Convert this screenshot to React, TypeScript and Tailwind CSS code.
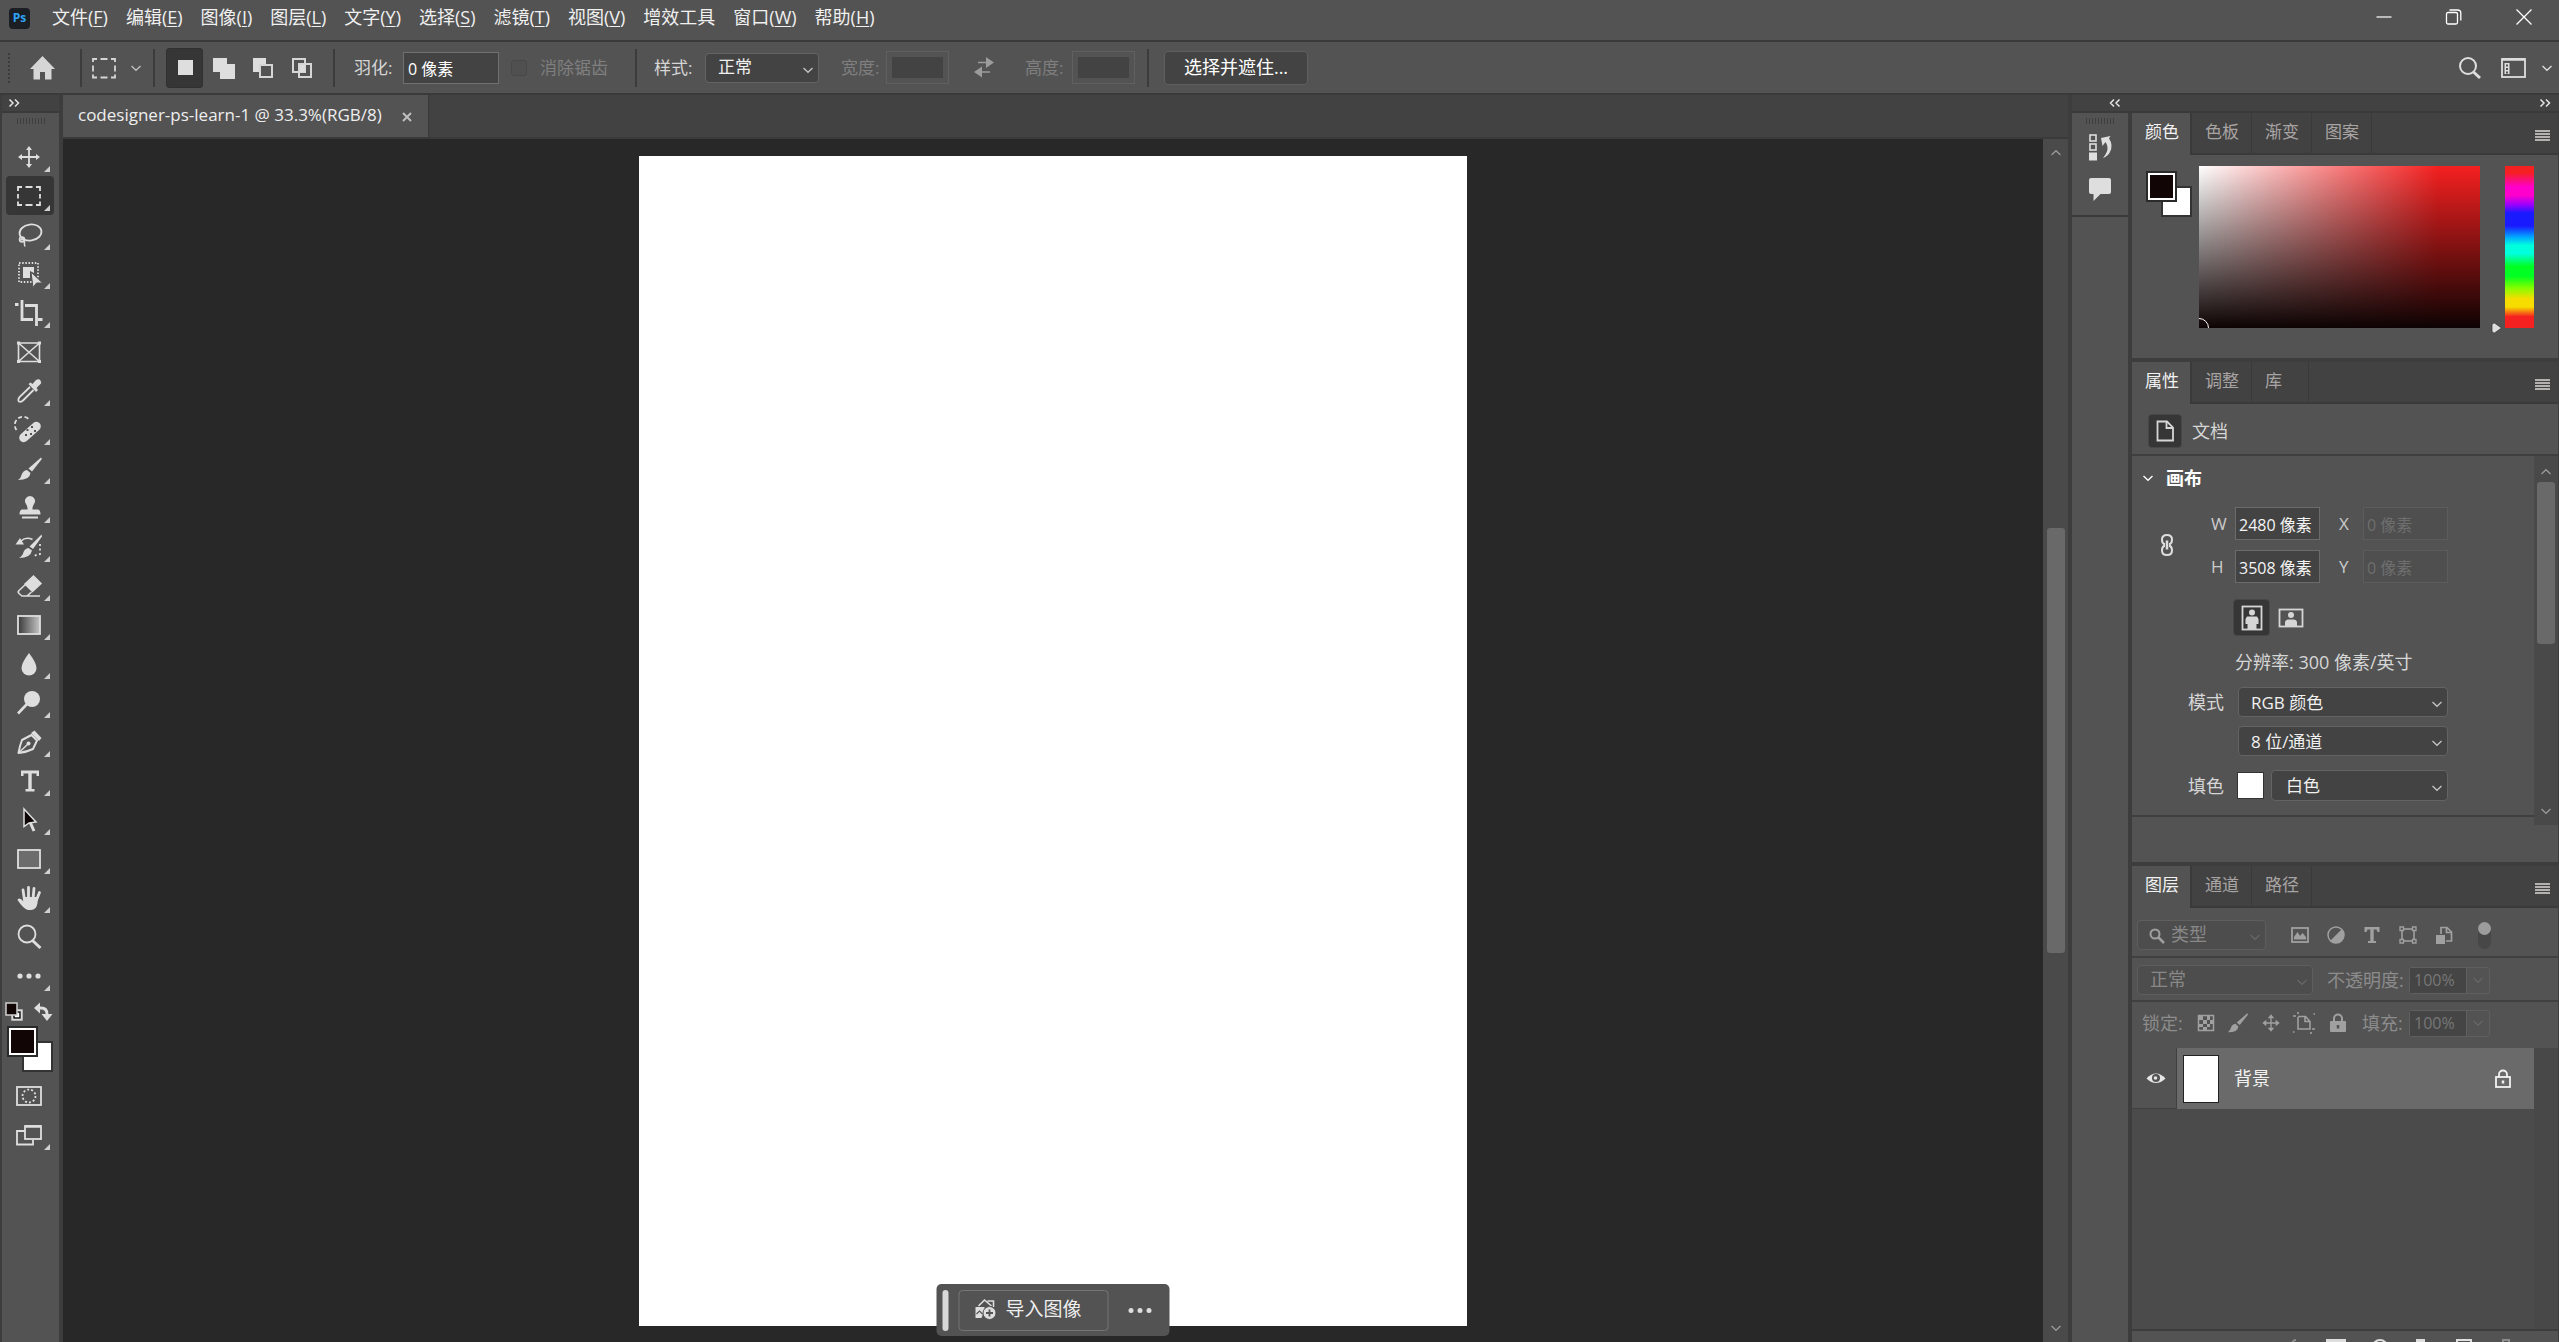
import React from "react";

type IconProps = { className?: string; children: React.ReactNode; box?: string };

function Icon({ className = "size-[30px]", children, box = "0 0 30 30" }: IconProps) {
  return (
    <svg
      viewBox={box}
      className={className}
      fill="none"
      stroke="currentColor"
      strokeWidth="2"
      aria-hidden="true"
    >
      {children}
    </svg>
  );
}

function Chevron({ className = "", up = false }: { className?: string; up?: boolean }) {
  return (
    <svg viewBox="0 0 12 12" className={`size-3 shrink-0 ${className}`} fill="none" stroke="currentColor" strokeWidth="1.3" aria-hidden="true">
      <path d={up ? "M1.5 8L6 3.7L10.5 8" : "M1.5 4L6 8.3L10.5 4"} />
    </svg>
  );
}

const menus: [string, string?][] = [
  ["文件", "F"], ["编辑", "E"], ["图像", "I"], ["图层", "L"], ["文字", "Y"], ["选择", "S"],
  ["滤镜", "T"], ["视图", "V"], ["增效工具"], ["窗口", "W"], ["帮助", "H"],
];

function MenuBar() {
  return (
    <header className="flex h-10 shrink-0 items-center bg-[#535353] pb-1.5 pl-[9px]">
      <div className="mt-0.5 flex size-[21px] items-center justify-center rounded-[4px] bg-[#1b1f24] text-[12px] font-bold text-[#2ea3f7]">
        Ps
      </div>
      <nav className="ml-[22px] flex gap-[18px] text-[18px] leading-6">
        {menus.map(([name, key]) => (
          <button key={name} type="button" className="whitespace-nowrap">
            {name}
            {key && (
              <>
                (<u className="underline-offset-2">{key}</u>)
              </>
            )}
          </button>
        ))}
      </nav>
      <div className="ml-auto flex items-center gap-[52px] pr-[26px] text-white">
        <button type="button" aria-label="最小化">
          <Icon className="size-[18px]" box="0 0 18 18"><path d="M1.500 9H16.500" strokeWidth="1.2" /></Icon>
        </button>
        <button type="button" aria-label="还原">
          <Icon className="size-[18px]" box="0 0 18 18">
            <rect x="1.500" y="4.500" width="11" height="11.500" rx="1.500" strokeWidth="1.3" />
            <path d="M4.500 2H12.500Q15.800 2 15.800 5V12.500" strokeWidth="1.3" />
          </Icon>
        </button>
        <button type="button" aria-label="关闭">
          <Icon className="size-[18px]" box="0 0 18 18"><path d="M1.500 1.500L16.500 16.500M16.500 1.500L1.500 16.500" strokeWidth="1.3" /></Icon>
        </button>
      </div>
    </header>
  );
}

function Divider({ className = "" }: { className?: string }) {
  return <div className={`h-[38px] w-0.5 shrink-0 bg-[#3c3c3c] ${className}`} />;
}

function OptionsBar() {
  return (
    <div className="flex h-[55px] shrink-0 items-center border-y-2 border-[#3a3a3a] bg-[#535353] pr-1.5 pl-2 text-[17px] text-[#d6d6d6]">
      <div className="h-[30px] w-[3px] border-l-2 border-dotted border-[#3c3c3c]" />
      <button type="button" aria-label="主页" className="ml-[17px]">
        <Icon className="size-7" box="0 0 28 28">
          <path d="M14.500 2L2 15H5.500V25.500H12V18H17V25.500H23.500V15H27Z" fill="currentColor" stroke="none" />
        </Icon>
      </button>
      <Divider className="ml-6" />
      <button type="button" aria-label="矩形选框工具" className="ml-2 flex items-center">
        <Icon className="size-7" box="0 0 28 28">
          <path d="M3 8V5H7M10.500 5H17.500M21 5H25V8M25 11.500V17.500M25 20.500V23.500H21M17.500 23.500H10.500M7 23.500H3V20.500M3 17.500V11.500" strokeWidth="1.800" />
        </Icon>
        <Chevron className="ml-3 text-[#c0c0c0]" />
      </button>
      <Divider className="ml-[11px]" />
      <div className="ml-[11px] flex gap-0.5">
        <button type="button" aria-label="新选区" className="flex h-10 w-[37px] items-center justify-center rounded-[3px] border border-[#303030] bg-[#363636]">
          <Icon className="size-6" box="0 0 24 24"><rect x="5" y="4" width="15" height="15" fill="#dedede" stroke="none" /></Icon>
        </button>
        <button type="button" aria-label="添加到选区" className="flex h-10 w-[37px] items-center justify-center">
          <Icon className="size-6" box="0 0 24 24"><path d="M1 2H15V8H23V23H8V16H1Z" fill="#dedede" stroke="none" /></Icon>
        </button>
        <button type="button" aria-label="从选区减去" className="flex h-10 w-[37px] items-center justify-center">
          <Icon className="size-6" box="0 0 24 24">
            <path d="M2 2H15V8H8V16H2Z" fill="#dedede" stroke="none" />
            <rect x="9" y="9" width="12" height="12" />
          </Icon>
        </button>
        <button type="button" aria-label="与选区交叉" className="flex h-10 w-[37px] items-center justify-center">
          <Icon className="size-6" box="0 0 24 24">
            <rect x="3" y="3" width="12" height="13" />
            <rect x="9" y="8" width="12" height="13" />
            <rect x="10" y="9" width="5" height="7" fill="#dedede" stroke="none" />
          </Icon>
        </button>
      </div>
      <Divider className="ml-[13px]" />
      <label htmlFor="feather" className="ml-[19px] w-[49px] shrink-0">羽化:</label>
      <input id="feather" defaultValue="0 像素" className="h-8 w-24 border border-[#707070] bg-[#434343] px-1 text-[16px] text-white" />
      <input id="anti" type="checkbox" disabled className="ml-3 size-4 appearance-none rounded-[3px] border border-[#484848] bg-[#505050]" />
      <label htmlFor="anti" className="ml-[13px] w-[95px] shrink-0 text-[#7f7f7f]">消除锯齿</label>
      <Divider />
      <label htmlFor="style" className="ml-[17px] w-[51px] shrink-0">样式:</label>
      <Select id="style" value="正常" className="h-[30px] w-[114px]" />
      <label htmlFor="ow" className="ml-[22px] w-[45px] shrink-0 text-[#7f7f7f]">宽度:</label>
      <input id="ow" disabled className="h-[33px] w-[63px] border border-[#606060] bg-[#434343] bg-clip-content p-[5px]" />
      <button type="button" disabled aria-label="交换宽度和高度" className="ml-[23px] text-[#9c9c9c]">
        <Icon className="size-6" box="0 0 24 24">
          <path d="M6 6.500H15M9 16H18" strokeWidth="1.500" />
          <path d="M14 1L22 6.500L14 12ZM10 10.500L2 16L10 21.500Z" fill="currentColor" stroke="none" />
        </Icon>
      </button>
      <label htmlFor="oh" className="ml-[29px] w-[47px] shrink-0 text-[#7f7f7f]">高度:</label>
      <input id="oh" disabled className="h-[33px] w-[63px] border border-[#606060] bg-[#434343] bg-clip-content p-[5px]" />
      <Divider className="ml-3" />
      <button type="button" className="ml-[15px] h-[34px] w-36 rounded-[4px] border border-[#5f5f5f] bg-[#434343] text-[18px] text-white">
        选择并遮住...
      </button>
      <button type="button" aria-label="搜索" className="ml-auto text-[#dedede]">
        <Icon className="size-6" box="0 0 24 24"><circle cx="10" cy="10" r="8" /><path d="M15.500 16L22 22" strokeWidth="3" /></Icon>
      </button>
      <button type="button" aria-label="选择工作区" className="ml-[17px] flex items-center text-[#dedede]">
        <Icon className="size-7" box="0 0 28 28">
          <rect x="3" y="5" width="23" height="18" strokeWidth="1.800" />
          <path d="M3 5.500H26" strokeWidth="2.500" />
          <rect x="5.500" y="9" width="5" height="11" fill="currentColor" stroke="none" />
          <path d="M8 10.500V19.500" strokeWidth="2" strokeDasharray="2 1.500" stroke="#535353" />
        </Icon>
        <Chevron className="ml-3.5" />
      </button>
    </div>
  );
}

type SelectProps = { id: string; value: string; label?: string; className?: string; dim?: boolean; pad?: string; text?: string };

function Select({ id, value, label, className = "", dim = false, pad = "pl-3", text = "text-[17px]" }: SelectProps) {
  return (
    <div
      className={`relative shrink-0 rounded-[4px] border ${dim ? "border-[#5e5e5e] bg-[#4d4d4d] text-[#888]" : "border-[#636363] bg-[#434343] text-[#f0f0f0]"} ${className}`}
    >
      <select id={id} aria-label={label} disabled={dim} defaultValue={value} className={`h-full w-full appearance-none pb-0.5 opacity-100 ${pad} ${text}`}>
        <option>{value}</option>
      </select>
      <Chevron className={`pointer-events-none absolute top-1/2 right-1 -translate-y-1/3 ${dim ? "text-[#666]" : "text-[#c4c4c4]"}`} />
    </div>
  );
}

const C = "currentColor";
const brush = (
  <>
    <path d="M27 3.500Q28 4 27.500 5.500L18 17.500L14.500 14.500Z" fill={C} stroke="none" />
    <path d="M13 16L16.500 19Q16 26 4 26Q7 24 7.500 21Q9 16.500 13 16Z" fill={C} stroke="none" />
  </>
);

type Tool = { name: string; icon: React.ReactNode; more?: boolean };

const tools: Tool[] = [
  { name: "移动工具", icon: <><path d="M6 15H24M15 6V24" strokeWidth="1.800" /><path d="M15 4L18 8H12ZM15 26L18 22H12ZM4 15L8 12V18ZM26 15L22 12V18Z" fill={C} stroke="none" /></> },
  { name: "矩形选框工具", icon: <path d="M4 10V6H8M11.500 6H18.500M22 6H26V10M26 13V17.500M26 20.500V24H22M18.500 24H11.500M8 24H4V20.500M4 17.500V13" strokeWidth="1.800" /> },
  { name: "套索工具", icon: <><ellipse cx="16.500" cy="12.500" rx="11" ry="8" strokeWidth="1.800" transform="rotate(-8 16.500 12.500)" /><circle cx="8" cy="19.500" r="2.500" strokeWidth="1.500" /><path d="M6 20Q11 19 10.500 22Q10 24 11 26.500" strokeWidth="1.500" /></> },
  { name: "对象选择工具", icon: <><rect x="5" y="4" width="19" height="19" strokeWidth="1.800" strokeDasharray="1.500 1.670" /><path d="M9 8H20V14L16 12V19H9Z" fill={C} stroke="none" /><path d="M17 13L28.500 24L22.500 24L19 28.500Z" fill={C} stroke="#535353" strokeWidth="1" /></> },
  { name: "裁剪工具", icon: <path d="M1 6.500H4.500M8 2V21.500H19M24 21.500H28.500M11 7.500H22.500V28" strokeWidth="2.800" /> },
  { name: "图框工具", more: false, icon: <><path d="M4.500 6H25.500V24.500H4.500ZM4.500 6L25.500 24.500M25.500 6L4.500 24.500" strokeWidth="1.600" /><path d="M3 4.500H6V7.500H3ZM24 4.500H27V7.500H24ZM3 23H6V26H3ZM24 23H27V26H24Z" fill={C} stroke="none" /></> },
  { name: "吸管工具", icon: <><path d="M16 11L5.500 21Q3.500 24 5 25.500Q7 26.500 9.500 24L19.500 14" strokeWidth="1.800" /><path d="M14.500 8L16.500 6.500L18.500 8L22 4Q25 2.500 26.500 4.500Q28 6.500 26 8.500L22.500 12L24 14L22 16Z" fill={C} stroke="none" /></> },
  { name: "污点修复画笔工具", icon: <><rect x="3" y="12.500" width="26" height="9" rx="4.500" transform="rotate(-42 16 17)" fill={C} stroke="none" /><path d="M2.500 15A8 8 0 0 1 15.500 5" strokeWidth="1.800" strokeDasharray="4 2.500" /><path d="M13.500 14V16M18 11V13M17 18V20M21 15V17M12 19V21" stroke="#535353" strokeWidth="2" /></> },
  { name: "画笔工具", icon: brush },
  { name: "仿制图章工具", icon: <path d="M16 3A5 5 0 0 1 20 11Q18 14 18.500 16.500H24Q26.500 17 26.500 21.500H5.500Q5.500 17 8 16.500H13.500Q14 14 12 11A5 5 0 0 1 16 3ZM8 23.500H24V25.500H8Z" fill={C} stroke="none" /> },
  { name: "历史记录画笔工具", icon: <><path d="M27.500 2.500L28 4.500L19 17L15.500 14.500ZM14.500 16L18 18.500Q16.500 26 5 26Q9 23.500 9.500 20Q11 16.500 14.500 16ZM1.500 12.500L6 6L10 12.500Z" fill={C} stroke="none" /><path d="M7 9Q12 4.500 18.500 7.500" strokeWidth="1.600" /><path d="M26 12V22L19 24" strokeWidth="1.800" strokeDasharray="2 2.500" /></> },
  { name: "橡皮擦工具", icon: <><path d="M11 13L19.500 5L27 12.500L18.500 20.500Z" fill={C} strokeWidth="1.500" /><path d="M11.500 13.500L5 19.500Q3.500 21 5 22.500L8 25H13L17.500 21M12 25H26" strokeWidth="1.600" /></> },
  { name: "渐变工具", icon: <><defs><linearGradient id="toolGradient"><stop offset="0" stopColor="#3a3a3a" /><stop offset="1" stopColor="#c6c6c6" /></linearGradient></defs><rect x="4" y="6" width="22" height="18" fill="url(#toolGradient)" strokeWidth="1.800" /></> },
  { name: "模糊工具", icon: <path d="M15 4Q22.500 14 22.500 19A7.500 7.500 0 0 1 7.500 19Q7.500 14 15 4Z" fill={C} stroke="none" /> },
  { name: "减淡工具", icon: <><circle cx="18" cy="11" r="8" fill={C} stroke="none" /><path d="M13 16L4 25.500" strokeWidth="2.600" /></> },
  { name: "钢笔工具", icon: <><path d="M17.500 8L8 13Q6 18 4.500 26Q13 25 19 22L23 13.500Z" strokeWidth="2" strokeLinejoin="round" /><path d="M5 25.500L14 17" strokeWidth="1.500" /><circle cx="14.500" cy="16.500" r="2" fill={C} stroke="none" /><path d="M17 6L20.500 3.500L27.500 11L25 14Z" fill={C} stroke="none" /></> },
  { name: "横排文字工具", icon: <path d="M7 4.500H25V10H22.500V7.500H17.700V23H20.500V25.500H11.500V23H14.300V7.500H9.500V10H7Z" fill={C} stroke="none" /> },
  { name: "路径选择工具", icon: <><path d="M16 17L20 26" strokeWidth="3" /><path d="M10 4L22 17L15 18L10 21.500Z" fill="#0d0505" strokeWidth="1.500" /></> },
  { name: "矩形工具", icon: <rect x="4" y="6" width="22" height="18" fill="#6c6c6c" strokeWidth="1.800" /> },
  { name: "抓手工具", icon: <><path d="M10.500 17L9 7M14.500 16V4.500M19 16L20 5.500M22.500 17L25.500 9.500" strokeWidth="2.800" strokeLinecap="round" /><path d="M9 14H24L23.500 20Q22.500 27 17 27H14Q9.500 26 3.500 17Q4 14.500 7 16L9.500 18.500Z" fill={C} stroke="none" /></> },
  { name: "缩放工具", more: false, icon: <><circle cx="13" cy="12" r="8.500" strokeWidth="1.800" /><path d="M18.500 18.500L26.500 26" strokeWidth="3" /></> },
  { name: "编辑工具栏", icon: <><circle cx="6" cy="15" r="2.600" fill={C} stroke="none" /><circle cx="15" cy="15" r="2.600" fill={C} stroke="none" /><circle cx="24" cy="15" r="2.600" fill={C} stroke="none" /></> },
];

function Corner() {
  return (
    <svg viewBox="0 0 6 6" className="absolute right-1 bottom-1 size-1.5" aria-hidden="true">
      <path d="M6 0V6H0Z" fill="#d0d0d0" />
    </svg>
  );
}

function Toolbar() {
  return (
    <aside className="w-[63px] shrink-0 border-x-2 border-r-4 border-[#3d3d3d] bg-[#535353] text-[#dedede]">
      <div className="flex h-[18px] items-center border-b-2 border-[#3a3a3a] bg-[#424242] pl-1.5">
        <DoubleChevron />
      </div>
      <div className="mx-auto mt-[5px] h-1.5 w-7 bg-[repeating-linear-gradient(90deg,#3e3e3e_0_1px,transparent_1px_3px)]" />
      <div className="mt-[13px] flex flex-col items-start pl-1">
        {tools.map((t, i) => (
          <button
            key={t.name}
            type="button"
            aria-label={t.name}
            className={`relative flex h-[39px] w-12 items-center pl-2 ${i === 1 ? "rounded-[4px] bg-[#363636]" : ""}`}
          >
            <Icon>{t.icon}</Icon>
            {t.more !== false && <Corner />}
          </button>
        ))}
      </div>
      <div className="flex justify-between px-[3px] pt-[7px] pr-1.5">
        <button type="button" aria-label="默认前景色和背景色">
          <Icon className="size-5" box="0 0 20 20">
            <rect x="7" y="8" width="10" height="10" fill="#fff" stroke="#cfcfcf" strokeWidth="1.500" />
            <rect x="9" y="10" width="6" height="6" fill="#fff" stroke="#111" strokeWidth="1.500" />
            <rect x="1" y="1" width="11" height="12" fill="#110505" stroke="#cfcfcf" strokeWidth="1.500" />
          </Icon>
        </button>
        <button type="button" aria-label="切换前景色和背景色">
          <Icon className="size-5" box="0 0 20 20">
            <path d="M5 6H8Q14 6 14 12V14" strokeWidth="2.800" />
            <path d="M7 0.500V11.500L1 6ZM8.500 12H19.500L14 19Z" fill={C} stroke="none" />
          </Icon>
        </button>
      </div>
      <div className="mt-1 ml-[5px]">
        <Swatches />
      </div>
      <div className="flex flex-col items-start pt-1 pl-1">
        <button type="button" aria-label="快速蒙版" className="relative flex h-[39px] w-12 items-center pl-2">
          <Icon>
            <rect x="3" y="6" width="24" height="18" strokeWidth="1.800" />
            <circle cx="15" cy="15" r="6.500" strokeDasharray="2 2" strokeWidth="1.800" />
          </Icon>
        </button>
        <button type="button" aria-label="屏幕模式" className="relative flex h-[39px] w-12 items-center pl-2">
          <Icon>
            <path d="M11 11H3V24.500H19V20" strokeWidth="1.800" />
            <rect x="11" y="6" width="16" height="13" strokeWidth="1.800" />
            <path d="M11 6.500H27" strokeWidth="2.500" />
          </Icon>
          <Corner />
        </button>
      </div>
    </aside>
  );
}

function Swatches() {
  return (
    <div className="relative h-[46px] w-[46px]">
      <button type="button" aria-label="背景色" className="absolute right-0 bottom-0 size-[31px] border-2 border-[#333] bg-white" />
      <button type="button" aria-label="前景色" className="absolute top-0 left-0 size-[31px] border-2 border-[#2a2a2a] bg-[#110505] shadow-[inset_0_0_0_2px_#fff]" />
    </div>
  );
}

function DoubleChevron({ left = false }: { left?: boolean }) {
  return (
    <svg viewBox="0 0 12 8" className="h-2 w-3" fill="none" stroke="#e4e4e4" strokeWidth="1.500" aria-hidden="true">
      <path d={left ? "M5 0.500L1.500 4L5 7.500M10.500 0.500L7 4L10.500 7.500" : "M1.500 0.500L5 4L1.500 7.500M7 0.500L10.500 4L7 7.500"} />
    </svg>
  );
}

function Workspace() {
  return (
    <main className="flex min-w-0 flex-1 flex-col">
      <div className="flex h-11 shrink-0 border-b-2 border-[#3a3a3a] bg-[#424242]">
        <div className="flex items-center border-r border-[#383838] bg-[#535353] pr-4 pb-0.5 pl-[15px] text-[17px]">
          <span className="whitespace-nowrap text-[#eee]">codesigner-ps-learn-1 @ 33.3%(RGB/8)</span>
          <button type="button" aria-label="关闭文档" className="ml-5">
            <svg viewBox="0 0 10 10" className="mt-1 size-2.5" fill="none" stroke="#bfbfbf" strokeWidth="2" aria-hidden="true">
              <path d="M1 1L9 9M9 1L1 9" />
            </svg>
          </button>
        </div>
      </div>
      <div className="flex min-h-0 flex-1 bg-[#282828]">
        <div className="relative flex min-w-0 flex-1 justify-center pt-[17px] pb-4">
          <div className="aspect-[2480/3508] h-full bg-white" />
          <div className="absolute bottom-1.5 left-1/2 flex h-[52px] -translate-x-1/2 items-center rounded-[5px] bg-[#535353] pr-[18px] pl-1.5 text-[#eee]">
            <div className="h-[41px] w-1.5 rounded-[3px] bg-[#d8d8d8]" />
            <button type="button" className="ml-2.5 flex h-[41px] w-[150px] items-center rounded-[4px] border border-[#757575] pr-4 pb-0.5 pl-3.5 text-[19px]">
              <Icon className="mr-2 size-6" box="0 0 24 24">
                <path d="M5 9L11 3L18 9M14 4H20V10" stroke="#dedede" strokeWidth="1.600" />
                <path d="M2 10H11V13L8 21H2Z" fill="#dedede" stroke="none" />
                <path d="M3 17L6 14L9 17" stroke="#535353" strokeWidth="1.200" />
                <circle cx="16" cy="16" r="6.500" fill="#dedede" stroke="#535353" strokeWidth="1" />
                <path d="M16 12.500V19.500M12.500 16H19.500" stroke="#535353" strokeWidth="1.800" />
              </Icon>
              <span className="whitespace-nowrap">导入图像</span>
            </button>
            <button type="button" aria-label="更多选项" className="ml-5 flex gap-1">
              <span className="size-[5px] rounded-full bg-[#dedede]" />
              <span className="size-[5px] rounded-full bg-[#dedede]" />
              <span className="size-[5px] rounded-full bg-[#dedede]" />
            </button>
          </div>
        </div>
        <div className="flex w-[25px] flex-col items-center bg-[#4a4a4a] pt-2 pb-2 text-[#999]">
          <Chevron up />
          <div className="flex min-h-0 w-full flex-1 flex-col items-center">
            <div className="flex-[368]" />
            <div className="w-[18px] flex-[423] rounded-[3px] bg-[#696969]" />
            <div className="flex-[368]" />
          </div>
          <Chevron />
        </div>
      </div>
    </main>
  );
}

function PanelTabs({ tabs }: { tabs: string[] }) {
  return (
    <div className="flex h-[42px] shrink-0 bg-[#424242] text-[17px]" role="tablist">
      {tabs.map((t, i) => (
        <button
          key={t}
          type="button"
          role="tab"
          aria-selected={i === 0}
          className={
            i === 0
              ? "w-[60px] border-r-2 border-[#3a3a3a] bg-[#535353] pb-1 pl-0.5 text-[#f2f2f2]"
              : "min-w-[57px] border-r border-b-2 border-[#3a3a3a] pr-3 pb-0.5 pl-[13px] text-left text-[#a9a4a4]"
          }
        >
          {t}
        </button>
      ))}
      <div className="flex flex-1 items-center justify-end border-b-2 border-[#3a3a3a] pr-2">
        <button type="button" aria-label="面板菜单" className="text-[#b5b0b0]">
          <svg viewBox="0 0 15 11" className="mt-1 h-[11px] w-[15px]" aria-hidden="true">
            <path d="M0 0H15V2H0ZM0 3H15V5H0ZM0 6H15V8H0ZM0 9H15V11H0Z" fill="currentColor" />
          </svg>
        </button>
      </div>
    </div>
  );
}

function ColorPanel() {
  return (
    <section className="flex h-[249px] shrink-0 flex-col border-b-4 border-[#3d3d3d]">
      <PanelTabs tabs={["颜色", "色板", "渐变", "图案"]} />
      <div className="flex pt-[11px] pr-6 pl-3.5">
        <div className="mt-[5px]">
          <Swatches />
        </div>
        <div className="relative ml-[7px] h-[162px] flex-1 overflow-hidden bg-[linear-gradient(to_top,#0d0303,transparent),linear-gradient(to_right,#fff,#f52020_85%)]">
          <div className="absolute -bottom-2.5 -left-2.5 size-5 rounded-full border border-white" />
        </div>
        <div className="relative ml-[25px] h-[162px] w-[29px] bg-[linear-gradient(to_bottom,#f52020_4%,#f0c_13%,#f0c_18%,#90f_24%,#1a1aff_29%,#1a1aff_37%,#0af_44%,#00ffdd_49%,#00ffdd_54%,#0f2_62%,#0f2_68%,#7dff00_75%,#f7dc00_82%,#f7dc00_87%,#f52020_93%)]">
          <svg viewBox="0 0 11 12" className="absolute -bottom-1.5 -left-3.5 h-3 w-[11px]" aria-hidden="true">
            <path d="M1 3Q1 1 3.500 1L10.500 6L3.500 11Q1 11 1 9Z" fill="#dedede" stroke="#333" strokeWidth="0.700" />
          </svg>
        </div>
      </div>
    </section>
  );
}

function NumberField({ id, label, value, dim }: { id: string; label: string; value: string; dim?: boolean }) {
  return (
    <>
      <label htmlFor={id} className="text-[17px] text-[#ccc]">{label}</label>
      <input
        id={id}
        defaultValue={value}
        disabled={dim}
        className={`h-[33px] w-[85px] border px-[3px] text-[16px] ${dim ? "border-[#5c5c5c] bg-[#4f4f4f] text-[#6e6e6e]" : "border-[#6b6b6b] bg-[#434343] text-[#f4f4f4]"}`}
      />
    </>
  );
}

function PropertiesPanel() {
  return (
    <section className="flex h-[504px] shrink-0 flex-col border-b-4 border-[#3d3d3d]">
      <PanelTabs tabs={["属性", "调整", "库"]} />
      <div className="flex h-[52px] shrink-0 items-center border-b-2 border-[#3f3f3f] pt-1 pl-4 text-[18px] text-[#d6d6d6]">
        <div className="flex size-[34px] items-center justify-center rounded-[4px] border border-[#474747] bg-[#363636]">
          <Icon className="size-6" box="0 0 24 24">
            <path d="M4.500 2.500H14L20 8.500V21.500H4.500Z" strokeWidth="1.800" />
            <path d="M13.500 2.500V9H20" strokeWidth="1.800" />
          </Icon>
        </div>
        <span className="ml-2.5">文档</span>
      </div>
      <div className="flex h-[369px] shrink-0">
        <div className="flex flex-1 flex-col">
          <div className="flex-1 border-b-2 border-[#3f3f3f] pt-2 pl-2.5 text-[18px] leading-7 text-[#d6d6d6]">
            <button type="button" className="flex items-center font-bold text-white">
              <Chevron />
              <span className="ml-3">画布</span>
            </button>
            <div className="mt-[15px] flex items-center">
              <button type="button" aria-label="链接宽度和高度" className="ml-[17px] text-[#dedede]">
                <Icon className="h-6 w-4" box="0 0 16 24">
                  <path d="M6 11H5Q3 10 3 6.500Q3 2 8 2Q13 2 13 6.500Q13 10 11 11H10M6 13H5Q3 14 3 17.500Q3 22 8 22Q13 22 13 17.500Q13 14 11 13H10" />
                  <path d="M8 7.500V16.500" strokeWidth="2.500" />
                </Icon>
              </button>
              <div className="ml-9 grid grid-cols-[24px_104px_24px_85px] items-center gap-y-2.5">
                <NumberField id="pw" label="W" value="2480 像素" />
                <NumberField id="px" label="X" value="0 像素" dim />
                <NumberField id="ph" label="H" value="3508 像素" />
                <NumberField id="py" label="Y" value="0 像素" dim />
              </div>
            </div>
            <div className="mt-4 ml-[91px] flex items-center gap-[7px]">
              <button type="button" aria-label="纵向" className="flex size-[37px] items-center justify-center rounded-[4px] border border-[#474747] bg-[#363636]">
                <Icon className="size-7" box="0 0 28 28">
                  <rect x="4.500" y="2.500" width="19" height="23" strokeWidth="1.800" />
                  <circle cx="14" cy="8.500" r="3" fill={C} stroke="none" />
                  <path d="M9 12.500H19L20.500 15V20H18.500V25H9.500V20H7.500V15Z" fill={C} stroke="none" />
                </Icon>
              </button>
              <button type="button" aria-label="横向">
                <Icon className="size-7" box="0 0 28 28">
                  <rect x="2.500" y="5.500" width="23" height="17" strokeWidth="1.800" />
                  <circle cx="14" cy="11" r="3" fill={C} stroke="none" />
                  <path d="M8 22V18Q8.500 15.500 11 15.500H17Q19.500 15.500 20 18V22Z" fill={C} stroke="none" />
                </Icon>
              </button>
            </div>
            <p className="mt-3 ml-[93px] whitespace-nowrap">分辨率: 300 像素/英寸</p>
            <div className="mt-[11px] ml-[46px] grid w-[260px] grid-cols-[50px_1fr] items-center gap-y-[9px]">
              <label htmlFor="mode">模式</label>
              <Select id="mode" value="RGB 颜色" className="h-[30px]" />
              <span />
              <Select id="depth" label="位深度" value="8 位/通道" className="h-[30px]" />
            </div>
            <div className="mt-3.5 ml-[46px] flex w-[260px] items-center">
              <label htmlFor="fill" className="w-[49px]">填色</label>
              <span className="size-[27px] border border-[#333] bg-white" />
              <Select id="fill" value="白色" pad="pl-3.5" className="ml-[7px] h-[31px] flex-1" />
            </div>
          </div>
          <div className="h-2" />
        </div>
        <div className="flex w-6 flex-col items-center bg-[#494949] pt-2.5 pb-2 text-[#999]">
          <Chevron up />
          <div className="mt-1 h-[162px] w-[18px] rounded-[3px] bg-[#696969]" />
          <Chevron className="mt-auto" />
        </div>
      </div>
    </section>
  );
}

function Percent({ id, label, width }: { id: string; label: string; width: string }) {
  return (
    <div className="flex items-center">
      <label htmlFor={id} className={`whitespace-nowrap ${width}`}>{label}</label>
      <div className="flex h-[27px] w-[81px] items-stretch rounded-[3px] border border-[#5f5f5f] text-[#777]">
        <input id={id} disabled defaultValue="100%" className="w-[57px] border-r border-[#5f5f5f] bg-[#454545] pl-1 text-[16px]" />
        <span className="flex flex-1 items-center justify-center"><Chevron className="text-[#666]" /></span>
      </div>
    </div>
  );
}

function LayersPanel() {
  return (
    <section className="flex min-h-0 flex-1 flex-col text-[18px] text-[#8c8c8c]">
      <PanelTabs tabs={["图层", "通道", "路径"]} />
      <div className="flex h-[50px] shrink-0 items-center border-b-2 border-[#404040] pt-1.5 pl-[5px] text-[#a0a0a0]">
        <div className="relative">
          <Icon className="pointer-events-none absolute top-2 left-3 z-10 size-4" box="0 0 16 16">
            <circle cx="6" cy="6" r="4.500" /><path d="M9.500 9.500L15 15" strokeWidth="2.500" />
          </Icon>
          <Select id="filter" label="图层筛选" value="类型" dim pad="pl-[33px]" text="text-[18px]" className="h-[30px] w-[129px]" />
        </div>
        <div className="ml-6 flex items-center gap-4">
          <Icon className="size-5" box="0 0 20 20"><rect x="2" y="3" width="16" height="14" strokeWidth="1.800" /><path d="M4 14.500V12L7.500 7L10 11L12.500 8L16 12V14.500Z" fill={C} stroke="none" /></Icon>
          <Icon className="size-5" box="0 0 20 20"><circle cx="10" cy="10" r="8" strokeWidth="1.500" /><path d="M16 4A8.500 8.500 0 0 1 4 16Z" fill={C} stroke="none" /></Icon>
          <Icon className="size-5" box="0 0 20 20"><path d="M2.500 2H17.500V7H15.500L14.500 4.500H11.700V16H14V18H6V16H8.300V4.500H5.500L4.500 7H2.500Z" fill={C} stroke="none" /></Icon>
          <Icon className="size-5" box="0 0 20 20"><rect x="4" y="4" width="12" height="12" strokeWidth="1.600" /><path d="M2 2H5.500V5.500H2ZM14.500 2H18V5.500H14.500ZM2 14.500H5.500V18H2ZM14.500 14.500H18V18H14.500Z" fill="#535353" strokeWidth="1.300" /></Icon>
          <Icon className="size-5" box="0 0 20 20"><path d="M7 9V2.500H13L17.500 7V16H12M12.500 2.500V7.500H17.500" strokeWidth="1.700" /><rect x="2" y="10" width="9" height="9" fill={C} stroke="none" /></Icon>
        </div>
        <button type="button" aria-label="打开或关闭图层筛选" className="ml-6 flex h-[27px] w-[13px] items-start rounded-full bg-[#474747]">
          <span className="size-[13px] rounded-full bg-[#9c9c9c]" />
        </button>
      </div>
      <div className="flex h-11 shrink-0 items-center border-b-2 border-[#404040] pt-0.5 pl-[5px]">
        <Select id="blend" label="混合模式" value="正常" dim text="text-[18px]" className="h-[30px] w-[176px]" />
        <div className="ml-3.5">
          <Percent id="opacity" label="不透明度:" width="w-[82px]" />
        </div>
      </div>
      <div className="flex h-[46px] shrink-0 items-center pb-1 pl-2.5">
        <span className="w-[55px]">锁定:</span>
        <div className="flex items-center gap-3 text-[#a0a0a0]">
          <Icon className="size-[18px]" box="0 0 18 18"><rect x="1.500" y="1.500" width="15" height="15" strokeWidth="1.500" /><path d="M2 2H6V6H2ZM10 2H13V6H10ZM6 6H10V10H6ZM13 6H16V10H13ZM2 10H6V13H2ZM10 10H13V13H10ZM6 13H10V16H6Z" fill={C} stroke="none" /></Icon>
          <Icon className="size-[22px]" box="3 2 26 26">{brush}</Icon>
          <Icon className="size-5"><path d="M6 15H24M15 6V24" /><path d="M15 2L20 8H10ZM15 28L20 22H10ZM2 15L8 10V20ZM28 15L22 10V20Z" fill={C} stroke="none" /></Icon>
          <Icon className="size-[22px]" box="0 0 22 22"><path d="M0 4H3M19 17H22M5 0V2M0 20H1.500M20.500 2H22M18 20V22M5 5V17H17V9.500L12.500 4.500H5M12 4.500V9.500H17" strokeWidth="1.600" /></Icon>
          <Icon className="size-[22px]" box="0 0 22 22"><path d="M7 9V6.500A4 4 0 0 1 15 6.500V9" /><rect x="3" y="9" width="16" height="11" rx="1" fill={C} stroke="none" /><path d="M11 13V16.500" stroke="#535353" strokeWidth="2.500" /></Icon>
        </div>
        <div className="ml-[13px]">
          <Percent id="fillop" label="填充:" width="w-[47px]" />
        </div>
      </div>
      <div className="flex min-h-0 flex-1 bg-[#4b4b4b]">
        <div className="flex-1">
          <div className="flex h-[61px] bg-[#6a6a6a] text-[#f2f2f2]">
            <button type="button" aria-label="指示图层可见性" className="flex w-[45px] items-center justify-center border-r border-b border-[#404040] bg-[#535353] pl-1">
              <Icon className="size-5" box="0 0 20 20">
                <path d="M0.500 10.500Q10 0.500 19.500 10.500Q10 19.500 0.500 10.500Z" fill="#e6e6e6" stroke="none" />
                <circle cx="10" cy="10" r="4" fill="#535353" stroke="none" />
                <circle cx="9.500" cy="10" r="1.800" fill="#e6e6e6" stroke="none" />
              </Icon>
            </button>
            <div className="ml-1.5 h-12 w-9 self-center border border-[#222] bg-white" />
            <span className="ml-[15px] self-center">背景</span>
            <Icon className="mr-5 ml-auto size-[22px] self-center" box="0 0 22 22">
              <path d="M7 9V6.500A4 4 0 0 1 15 6.500V9" strokeWidth="1.800" />
              <rect x="4" y="9" width="14" height="10" strokeWidth="1.800" />
              <path d="M11 12.500V15.500" strokeWidth="2.500" />
            </Icon>
          </div>
        </div>
        <div className="w-6 bg-[#484848]" />
      </div>
      <div className="flex h-[13px] shrink-0 items-start justify-end gap-[26px] overflow-hidden border-t-2 border-[#3c3c3c] pt-2 pr-[44px] text-[#dedede]">
        <Icon className="size-4 text-[#8c8c8c]" box="0 0 16 16"><path d="M12 1Q9 1 8 5L6 15" /></Icon>
        <Icon className="size-5" box="0 0 20 20"><path d="M0 0H20V16H0Z" fill={C} stroke="none" /></Icon>
        <Icon className="size-4" box="0 0 16 16"><circle cx="8" cy="8" r="7" /></Icon>
        <Icon className="size-4" box="0 0 16 16"><path d="M2 0H11V4H16V14H2Z" fill={C} stroke="none" /></Icon>
        <Icon className="size-4" box="0 0 16 16"><rect x="1" y="1" width="14" height="14" /></Icon>
        <Icon className="size-4 text-[#8c8c8c]" box="0 0 16 16"><path d="M5 6V1H11V6" /></Icon>
      </div>
    </section>
  );
}

function Dock() {
  return (
    <aside className="flex w-[491px] shrink-0 flex-col border-l-4 border-[#3d3d3d] bg-[#535353] text-[#dedede]">
      <div className="flex h-[18px] shrink-0 items-center border-b-2 border-[#3a3a3a] bg-[#424242] pr-2 pl-[37px]">
        <button type="button" aria-label="展开面板"><DoubleChevron left /></button>
        <button type="button" aria-label="折叠为图标" className="ml-auto"><DoubleChevron /></button>
      </div>
      <div className="flex min-h-0 flex-1">
        <div className="w-[60px] shrink-0 border-r-4 border-[#3d3d3d]">
          <div className="flex h-[104px] flex-col items-center border-b-2 border-[#3a3a3a] pt-[5px]">
            <div className="h-1.5 w-7 bg-[repeating-linear-gradient(90deg,#3e3e3e_0_1px,transparent_1px_3px)]" />
            <button type="button" aria-label="历史记录" className="mt-2">
              <Icon>
                <rect x="5" y="3" width="6" height="6" strokeWidth="1.600" />
                <rect x="5" y="12" width="6" height="6" strokeWidth="1.600" />
                <rect x="4" y="20.500" width="8" height="8" fill={C} stroke="none" />
                <path d="M16 6L25.500 4L24 6.500Q28.500 13 25 20Q23 24 18 26Q23 20 22.500 15Q22 12 20.500 10L17.500 14Z" fill={C} stroke="none" />
              </Icon>
            </button>
            <button type="button" aria-label="注释" className="mt-3">
              <Icon><path d="M6 4H24Q26 4 26 6V18Q26 20 24 20H15.500L8.500 27V20H6Q4 20 4 18V6Q4 4 6 4Z" fill={C} stroke="none" /></Icon>
            </button>
          </div>
        </div>
        <div className="flex min-w-0 flex-1 flex-col border-r border-[#3d3d3d]">
          <ColorPanel />
          <PropertiesPanel />
          <LayersPanel />
        </div>
      </div>
    </aside>
  );
}

export default function App() {
  return (
    <div className="flex h-screen flex-col overflow-hidden bg-[#535353] font-['Open_Sans','Noto_Sans_CJK_SC',sans-serif] text-[#f0f0f0]">
      <MenuBar />
      <OptionsBar />
      <div className="flex min-h-0 flex-1">
        <Toolbar />
        <Workspace />
        <Dock />
      </div>
    </div>
  );
}
